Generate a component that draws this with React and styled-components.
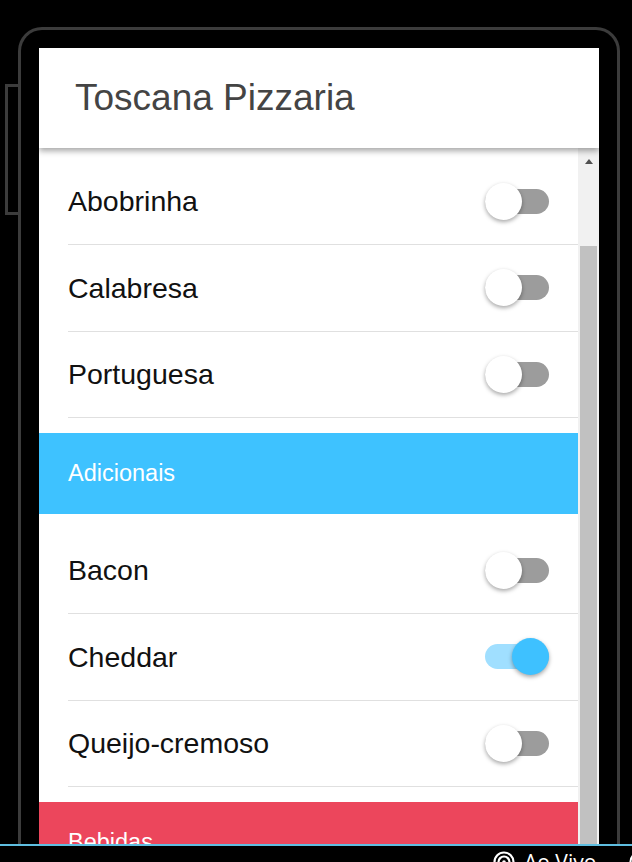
import React from 'react'
import styled, { createGlobalStyle } from 'styled-components'

const GlobalStyle = createGlobalStyle`
  html, body {
    margin: 0;
    padding: 0;
    background: #000;
    overflow: hidden;
  }
  * { box-sizing: border-box; }
`

const Page = styled.div`
  width: 632px;
  height: 862px;
  display: flex;
  flex-direction: column;
  background: #000;
  overflow: hidden;
`

const Stage = styled.div`
  height: 844px;
  display: flex;
  align-items: flex-start;
  padding-top: 27px;
  overflow: hidden;
`

const SideButton = styled.div`
  width: 13px;
  height: 131px;
  margin: 57px 0 0 5px;
  border: 3px solid #3c3c3c;
  border-right: none;
`

const Frame = styled.div`
  width: 602px;
  height: 900px;
  border: 3px solid #3c3c3c;
  border-bottom: none;
  border-radius: 24px 24px 0 0;
  padding: 18px 18px 0 18px;
`

const Screen = styled.div`
  height: 100%;
  display: flex;
  flex-direction: column;
  background: #fff;
`

const Header = styled.header`
  height: 100px;
  flex-shrink: 0;
  display: flex;
  align-items: center;
  padding-left: 36px;
  background: #fff;
  box-shadow: 0 3px 6px rgba(0, 0, 0, 0.35);
  position: relative;
  z-index: 2;
`

const Title = styled.h1`
  margin: 0;
  font-family: "Liberation Sans", Arial, sans-serif;
  font-weight: normal;
  font-size: 37px;
  color: #444;
`

const Body = styled.div`
  flex: 1;
  display: flex;
`

const Content = styled.div`
  flex: 1;
  display: flex;
  flex-direction: column;
`

const List = styled.ul`
  list-style: none;
  margin: 0;
  padding: ${p => (p.$first ? '10.5px' : '13.5px')} 0 15px;
`

const Row = styled.li`
  height: 86.5px;
  margin-left: 29px;
  padding-right: 29px;
  display: flex;
  align-items: center;
  justify-content: space-between;
  border-bottom: 1px solid #e0e0e0;
`

const Label = styled.span`
  font-family: "Liberation Sans", Arial, sans-serif;
  font-size: 28.5px;
  color: #111;
  padding-top: 1px;
`

const Band = styled.div`
  height: 81px;
  flex-shrink: 0;
  display: flex;
  align-items: center;
  padding-left: 29px;
  background: ${p => p.$color};
  font-family: "Liberation Sans", Arial, sans-serif;
  font-size: 23.5px;
  color: #fff;
`

const Toggle = styled.span`
  position: relative;
  width: 64px;
  height: 37px;
  display: flex;
  align-items: center;
`

const Track = styled.span`
  width: 64px;
  height: 25px;
  border-radius: 12.5px;
  background: ${p => (p.$on ? '#a0dfff' : '#9c9c9c')};
`

const Knob = styled.span`
  position: absolute;
  top: 0;
  ${p => (p.$on ? 'right: 0;' : 'left: 0;')}
  width: 37px;
  height: 37px;
  border-radius: 50%;
  background: ${p => (p.$on ? '#3ec1ff' : '#fff')};
  box-shadow: 0 2px 4px rgba(0, 0, 0, 0.35);
`

const ScrollTrack = styled.div`
  width: 21px;
  flex-shrink: 0;
  display: flex;
  flex-direction: column;
  background: #f1f1f1;
`

const ArrowButton = styled.div`
  height: 25px;
  display: flex;
  align-items: center;
  justify-content: center;
  padding-top: 1px;
`

const Thumb = styled.div`
  flex: 1;
  margin: 73px 2px 0 2px;
  background: #c1c1c1;
`

const BottomBar = styled.div`
  height: 18px;
  flex-shrink: 0;
  border-top: 2px solid #5fbee0;
  display: flex;
  align-items: flex-start;
  gap: 9px;
  padding: 6px 0 0 493px;
  white-space: nowrap;
  overflow: hidden;
  font-family: "Open Sans", "Noto Sans", sans-serif;
  font-size: 21px;
  line-height: 21px;
  color: #fff;
`

const BarText = styled.span`
  margin-right: 24px;
`

const LiveIcon = () => (
  <svg width="22" height="22" viewBox="0 0 22 22" fill="none" stroke="#fff" strokeWidth="2.2" style={{ flexShrink: 0, marginTop: '-1px' }}>
    <circle cx="11" cy="11" r="9.5" />
    <circle cx="11" cy="11" r="5.5" />
    <circle cx="11" cy="11" r="1.8" fill="#fff" stroke="none" />
  </svg>
)

const sabores = [
  { name: 'Abobrinha', on: false },
  { name: 'Calabresa', on: false },
  { name: 'Portuguesa', on: false },
]

const adicionais = [
  { name: 'Bacon', on: false },
  { name: 'Cheddar', on: true },
  { name: 'Queijo-cremoso', on: false },
]

const Item = ({ name, on }) => (
  <Row>
    <Label>{name}</Label>
    <Toggle>
      <Track $on={on} />
      <Knob $on={on} />
    </Toggle>
  </Row>
)

const App = () => {
  return (
    <Page>
      <GlobalStyle />
      <Stage>
        <SideButton />
        <Frame>
          <Screen>
            <Header>
              <Title>Toscana Pizzaria</Title>
            </Header>
            <Body>
              <Content>
                <List $first>
                  {sabores.map(s => <Item key={s.name} {...s} />)}
                </List>
                <Band $color="#3ec2ff">Adicionais</Band>
                <List>
                  {adicionais.map(s => <Item key={s.name} {...s} />)}
                </List>
                <Band $color="#ec465c">Bebidas</Band>
              </Content>
              <ScrollTrack>
                <ArrowButton>
                  <svg width="8" height="5" viewBox="0 0 8 5">
                    <path d="M0 5 L4 0 L8 5 Z" fill="#505050" />
                  </svg>
                </ArrowButton>
                <Thumb />
              </ScrollTrack>
            </Body>
          </Screen>
        </Frame>
      </Stage>
      <BottomBar>
        <LiveIcon />
        <BarText>Ao Vivo</BarText>
        <LiveIcon />
      </BottomBar>
    </Page>
  )
}

export default App
